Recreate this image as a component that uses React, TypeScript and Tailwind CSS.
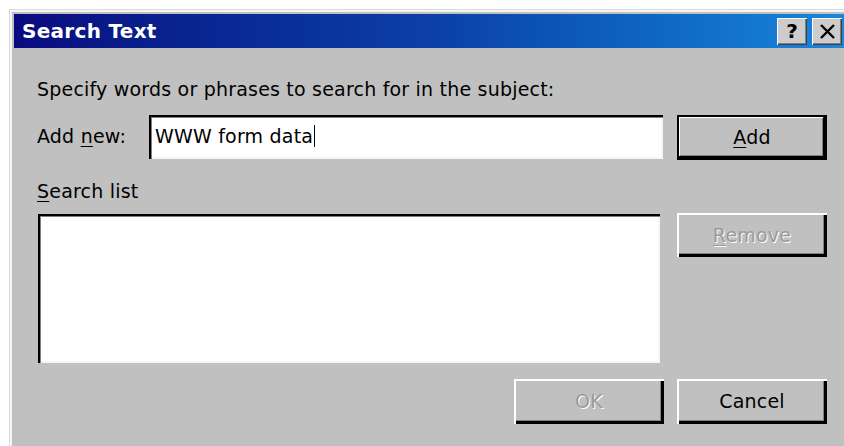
import React from "react";

const font = { fontFamily: '"DejaVu Sans", Verdana, sans-serif' };

function TitleButton({ children }: { children: React.ReactNode }) {
  return (
    <div className="flex h-[27px] w-[30px] items-center justify-center bg-[#cccccc] shadow-[inset_1px_1px_0_#fff,inset_-1px_-1px_0_#404040,inset_-2px_-2px_0_#808080]">
      {children}
    </div>
  );
}

function Button({
  label,
  mnemonic,
  disabled,
  isDefault,
  className = "",
}: {
  label: string;
  mnemonic?: number;
  disabled?: boolean;
  isDefault?: boolean;
  className?: string;
}) {
  const chars =
    mnemonic === undefined ? (
      label
    ) : (
      <>
        {label.slice(0, mnemonic)}
        <u className="underline-offset-[3px]">{label[mnemonic]}</u>
        {label.slice(mnemonic + 1)}
      </>
    );
  const frame = isDefault
    ? "shadow-[inset_2px_2px_0_#000,inset_-4px_-4px_0_#000,inset_3px_3px_0_#fff,inset_-5px_-5px_0_#808080]"
    : "shadow-[inset_2px_2px_0_#fff,inset_-3px_-3px_0_#000,inset_-4px_-4px_0_#808080]";
  return (
    <div
      className={`flex w-[150px] shrink-0 items-center justify-center bg-[#c0c0c0] text-[19px] leading-[22px] tracking-[0.2px] ${frame} ${
        disabled ? "text-[#9a9a9a] [text-shadow:1px_1px_0_#fff]" : "text-black"
      } ${className}`}
    >
      <span className="-mt-[1px]">{chars}</span>
    </div>
  );
}

export default function App() {
  return (
    <div className="h-[446px] w-[844px] overflow-hidden bg-white pl-[9px] pt-[9px]" style={font}>
      <div className="h-[460px] bg-[#c0c0c0] p-[5px] pr-0 shadow-[inset_1px_1px_0_#dcdcdc,inset_3px_3px_0_#f4f4f4]">
        {/* caption bar */}
        <div className="flex h-[34px] items-center justify-between bg-linear-to-r from-[#0a0a7e] via-[#0c3fa8] to-[#1a86dc] pl-[8px] pr-[2px]">
          <span className="text-[20px] font-bold leading-[24px] tracking-[0.3px] text-white">Search Text</span>
          <div className="flex gap-[5px]">
            <TitleButton>
              <span className="text-[20px] font-bold leading-none text-black">?</span>
            </TitleButton>
            <TitleButton>
              <svg width="17" height="15" viewBox="0 0 17 15">
                <path d="M2 1 L15 14 M15 1 L2 14" stroke="#000" strokeWidth="2.4" />
              </svg>
            </TitleButton>
          </div>
        </div>

        {/* body */}
        <div className="pl-[23px] text-[19px] leading-[22px] tracking-[0.2px] text-black">
          <div className="mt-[30px]">Specify words or phrases to search for in the subject:</div>

          <div className="mt-[15px] flex items-start">
            <div className="flex w-[626px] items-start">
              <span className="mt-[10px] w-[112px] shrink-0">
                Add <u className="underline-offset-[3px]">n</u>ew:
              </span>
              <div className="flex h-[44px] w-[514px] items-start bg-white pl-[6px] pt-[10px] shadow-[inset_2px_2px_0_#000,inset_3px_3px_0_#808080,inset_-2px_-2px_0_#f6f6f6]">
                <span>WWW form data</span>
                <span className="ml-[1px] h-[22px] w-[1px] bg-black" />
              </div>
            </div>
            <Button label="Add" mnemonic={0} isDefault className="ml-[14px] h-[45px]" />
          </div>

          <div className="mt-[20px]">
            <u className="underline-offset-[3px]">S</u>earch list
          </div>

          <div className="mt-[11px] flex items-start">
            <div className="w-[626px]">
              <div className="ml-[1px] mt-[1px] h-[149px] w-[622px] bg-white shadow-[inset_2px_2px_0_#000,inset_3px_3px_0_#808080,inset_-2px_-2px_0_#f6f6f6]" />
            </div>
            <Button label="Remove" mnemonic={0} disabled className="ml-[14px] h-[44px]" />
          </div>

          <div className="mt-[16px] flex items-start">
            <div className="flex w-[626px] justify-end">
              <Button label="OK" disabled className="mr-[-1px] h-[45px]" />
            </div>
            <Button label="Cancel" className="ml-[14px] h-[45px]" />
          </div>
        </div>
      </div>
    </div>
  );
}
